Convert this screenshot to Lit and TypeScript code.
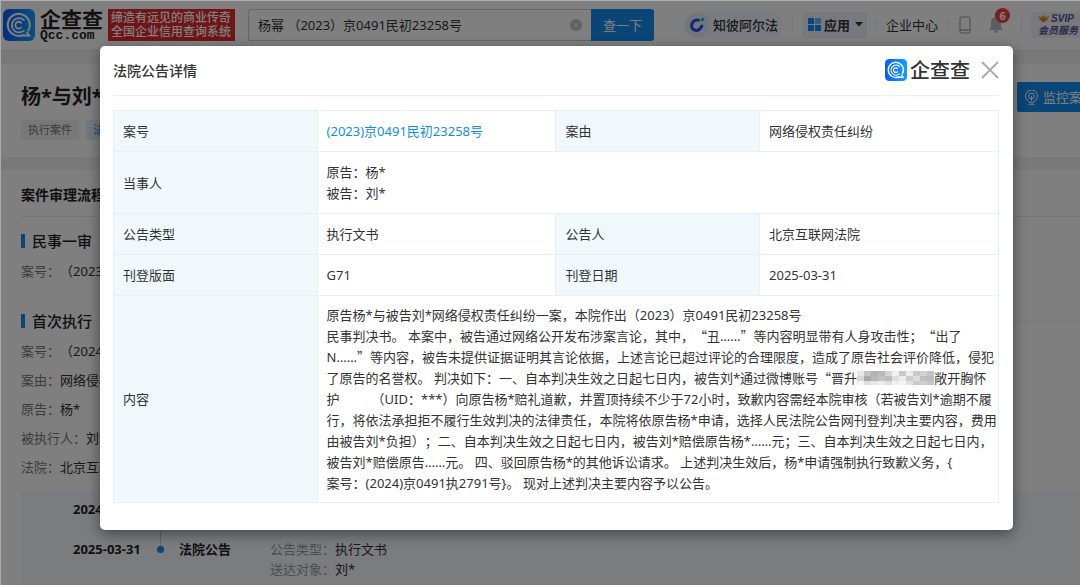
import { LitElement, html, css, svg } from "lit";
import { customElement } from "lit/decorators.js";

const brandMark = html`<svg class="mark" viewBox="0 0 32 32" aria-hidden="true">
  <defs>
    <linearGradient id="g" x1="0" y1="0" x2="1" y2="0">
      <stop offset="0" stop-color="#0a5cf5" />
      <stop offset="1" stop-color="#12a0ff" />
    </linearGradient>
  </defs>
  <rect width="32" height="32" rx="6" fill="url(#g)" />
  <g fill="none" stroke="#fff" stroke-linecap="round">
    <path d="M25.2 21.5A11 11 0 1 0 19.5 26.2L26.5 26.8L24 23.5" stroke-width="2" stroke-linejoin="round" />
    <path d="M20.9 21.6A7.2 7.2 0 1 1 20.9 10.9" stroke-width="1.8" />
    <path d="M18.2 18.5A3.4 3.4 0 1 1 18.2 13.8" stroke-width="1.8" />
  </g>
</svg>`;

const mosaicTones = [
  ["#e6e6e6", "#c4c4c4", "#b2b2b2", "#b9b9b9", "#d6d6d6", "#f0f0f0", "#c8c8c8", "#ededed", "#c9c9c9", "#d2d2d2", "#c4c4c4"],
  ["#d8d8d8", "#aaaaaa", "#b8b8b8", "#c2c2c2", "#bdbdbd", "#dedede", "#ededed", "#cccccc", "#dcdcdc", "#c0c0c0", "#bbbbbb"],
  ["#f4f4f4", "#e0e0e0", "#e6e6e6", "#ececec", "#dedede", "#f0f0f0", "#f4f4f4", "#e2e2e2", "#c8c8c8", "#cfcfcf", "#c6c6c6"],
];
const mosaic = html`<svg class="mosaic" viewBox="0 0 77 14" aria-hidden="true">
  ${mosaicTones.map((row, y) =>
    row.map((c, x) => svg`<rect x=${x * 7} y=${y * 5} width="7" height="5" fill=${c} />`)
  )}
</svg>`;
const lq = html`<span class="cjk">“</span>`;
const rq = html`<span class="cjk">”</span>`;

@customElement("app-root")
export class AppRoot extends LitElement {
  static styles = css`
    :host {
      display: block;
      position: relative;
      height: 100vh;
      overflow: hidden;
      box-sizing: border-box;
      background: #fff;
      color: #333;
      font: 13px/20px "Noto Sans", "Noto Sans CJK SC", sans-serif;
      text-spacing-trim: space-all;
    }
    * { box-sizing: border-box; }
    button, input { font: inherit; border: 0; margin: 0; padding: 0; background: none; color: inherit; text-spacing-trim: inherit; }
    h1, h2, h3, p, dl, dd, ol { margin: 0; padding: 0; list-style: none; }
    a { text-decoration: none; color: inherit; }
    svg { display: block; flex: none; }
    .cjk { font-family: "Noto Sans CJK SC", sans-serif; line-height: 1; }
    .page { min-width: 1130px; padding: 1px 0 0 1px; }

    .top { display: flex; align-items: center; height: 50px; padding: 0 0 2px 2px; border-bottom: 1px solid #e4e4e4; white-space: nowrap; }
    .top .mark { width: 32px; height: 32px; }
    .name { display: flex; flex-direction: column; width: 68px; margin-left: 5px; color: #222; }
    .name b { font-size: 21px; line-height: 22px; font-weight: 700; }
    .name small { font: bold 13px/12px "Liberation Mono", monospace; }
    .slogan { background: #e02a2f; color: #fff; font-weight: 500; font-size: 12px; line-height: 14px; padding: 2px 3px; width: 127px; }
    .search { display: flex; width: 406px; height: 32px; margin: 0 30px 0 13px; }
    .field { display: flex; align-items: center; flex: 1; min-width: 0; border: 1px solid #ccc; border-right: 0; border-radius: 3px 0 0 3px; padding: 0 9px; }
    .field input { flex: 1; min-width: 0; height: 30px; outline: 0; }
    .field svg { width: 12px; height: 12px; }
    .search .go { width: 63px; background: #128bed; color: #fff; border-radius: 0 3px 3px 0; }
    .nav { display: flex; align-items: center; gap: 9px; }
    .pill { display: flex; align-items: center; height: 26px; gap: 3px; font-weight: 500; background: #f2f6ff; border-radius: 13px; padding-right: 5px; }
    .pill svg { width: 26px; height: 26px; }
    .apps { display: flex; align-items: center; height: 26px; gap: 3px; font-weight: 700; background: #ecf2fc; border-radius: 2px; padding: 0 4px 0 6px; }
    .apps .grid { width: 13px; height: 13px; }
    .apps .caret { width: 8px; height: 5px; margin-left: 2px; }
    .sep { width: 1px; height: 13px; background: #e8e8e8; }
    .phone { width: 12px; height: 18px; margin: 0 8px 0 2px; }
    .bell { position: relative; padding-right: 8px; }
    .bell svg { width: 16px; height: 18px; }
    .badge { position: absolute; left: 7px; top: -8px; width: 15px; height: 15px; border-radius: 8px; background: #f04040; color: #fff; font-size: 11px; font-weight: 700; line-height: 15px; text-align: center; }
    .vip { background: #f0f0ff; color: #5a5490; border-radius: 3px; padding: 1px 7px; font: italic bold 10px/12px "Liberation Sans", "Noto Sans CJK SC", sans-serif; width: 60px; height: 26px; }
    .vip span { display: flex; align-items: center; gap: 2px; }
    .vip svg { width: 11px; height: 8px; }

    .strip { height: 13px; background: #f3f3f3; }
    .case { display: flex; justify-content: space-between; align-items: flex-start; padding: 18px 23px 17px 20px; white-space: nowrap; }
    .case h1 { font-size: 20px; line-height: 30px; color: #222; }
    .tags { display: flex; gap: 7px; margin-top: 8px; font-size: 11px; color: #777; }
    .tags span { background: #f0f0f0; padding: 0 7px; border-radius: 2px; }
    .tags .blue { background: #e3f2ff; color: #128bed; }
    .monitor { display: flex; align-items: center; gap: 5px; height: 30px; padding: 0 12px 0 8px; background: #128bed; color: #fff; border-radius: 2px; }
    .monitor svg { width: 13px; height: 15px; }
    .flow { padding: 0 20px; white-space: nowrap; }
    .flow h2 { font-size: 14px; line-height: 20px; padding: 15px 0 11px; color: #222; border-bottom: 1px solid #e8e8e8; }
    .flow h3 { display: flex; align-items: center; gap: 7px; font-size: 15px; line-height: 20px; color: #222; font-weight: 500; margin-top: 14px; }
    .flow h3::before { content: ""; width: 4px; height: 14px; background: #128bed; }
    .flow h3.ruled { margin-top: 30px; }
    .ruled::after { content: ""; flex: 1; height: 1px; background: #eee; }
    .facts { display: grid; gap: 9px; margin-top: 10px; }
    .facts div, .facts dd, .facts dt { display: flex; }
    .facts dt { color: #777; }
    .facts dd { color: #333; }
    .line { background: #f7f9fc; margin-top: 13px; padding: 9px 0 20px 52px; }
    .line li { display: grid; grid-template-columns: 78px 18px 1fr; gap: 0 2px; padding-bottom: 19px; position: relative; }
    .line time, .line b { font-weight: 700; color: #222; }
    .line li:not(:last-child)::after { content: ""; position: absolute; left: 87px; top: 12px; bottom: -8px; width: 1px; background: #ccd; }
    .dot { width: 7px; height: 7px; border-radius: 4px; background: #128bed; margin: 7px 4px; }
    .event { display: grid; grid-template-columns: 91px 1fr; padding-left: 6px; }
    .event i { font-style: normal; color: #999; }

    .shade { position: absolute; inset: 0; background: rgba(0, 0, 0, 0.5); border: solid #a9adad; border-width: 1px 0 0 1px; padding: 45px 67px 0 99px; }
    .dialog { background: #fff; border-radius: 5px; padding: 0 14px 27px 13px; box-shadow: 0 4px 14px rgba(0, 0, 0, 0.45); }
    .head { display: flex; align-items: center; height: 50px; padding: 0 0 2px; border-bottom: 1px solid #eee; margin-bottom: 14px; }
    .head h2 { flex: 1; font-size: 14px; color: #333; font-weight: 500; padding-top: 2px; }
    .head .mark { width: 22px; height: 22px; }
    .head b { font-size: 20px; line-height: 22px; font-weight: 500; margin: 2px 11px 0 3px; }
    .head svg.x { width: 18px; height: 18px; }
    table { width: 100%; border-collapse: collapse; table-layout: fixed; line-height: 21px; }
    .k { width: 23%; }
    .v { width: 27%; }
    th, td { border: 1px solid #e6f0f5; text-align: left; font-weight: 400; padding: 10px 9px 9px; vertical-align: middle; }
    th { background: #f0f8fc; }
    td.body { padding: 9px 0 8px 9px; white-space: nowrap; }
    td a { color: #128bed; }
    .mosaic { display: inline-block; width: 77px; height: 14px; vertical-align: -2px; }
    .gap { display: inline-block; width: 32px; }
  `;

  render() {
    return html`
      <div class="page">
        <header class="top">
          ${brandMark}
          <div class="name"><b>企查查</b><small>Qcc.com</small></div>
          <div class="slogan">缔造有远见的商业传奇<br />全国企业信用查询系统</div>
          <form class="search" @submit=${(e: Event) => e.preventDefault()}>
            <div class="field">
              <input aria-label="搜索" .value=${"杨幂 （2023）京0491民初23258号"} />
              <svg viewBox="0 0 12 12"><circle cx="6" cy="6" r="6" fill="#c4c4c4" /><path d="M4 4l4 4M8 4l-4 4" stroke="#fff" /></svg>
            </div>
            <button class="go">查一下</button>
          </form>
          <nav class="nav">
            <a class="pill" href="#">
              <svg viewBox="0 0 26 26"><circle cx="13" cy="13" r="12.5" fill="#e4ecfa" /><path d="M14.5 8.200C10 7.500 7.400 10.500 7.600 14c.4 5 6.800 6 9.400 1.500l.8-1.500" fill="none" stroke="#2350e8" stroke-width="3" stroke-linecap="round" /><circle cx="18.500" cy="7.500" r="1.800" fill="#14c4a4" /></svg>
              知彼阿尔法</a>
            <span class="sep"></span>
            <button class="apps">
              <svg class="grid" viewBox="0 0 13 13"><path d="M0 0h6v6H0zM0 7h6v6H0zM7 7h6v6H7z" fill="#128bed" /><path d="M7 0h6v6H7z" fill="#6cb9f5" /></svg>
              应用
              <svg class="caret" viewBox="0 0 8 5"><path d="M0 0h8L4 4.500z" fill="#333" /></svg>
            </button>
            <span class="sep"></span>
            <a href="#">企业中心</a>
            <span class="sep"></span>
            <svg class="phone" viewBox="0 0 12 18"><rect x="1" y="1" width="10" height="16" rx="2" fill="none" stroke="#bbb" stroke-width="1.500" /><path d="M1 14h10" stroke="#bbb" stroke-width="2" /></svg>
            <a class="bell" href="#" aria-label="消息"><svg viewBox="0 0 16 18"><path d="M8 1c-3.500 0-5 2.600-5 5.500V11l-2 3h14l-2-3V6.500C13 3.600 11.500 1 8 1z" fill="#bbb" /><path d="M6 15.500h4" stroke="#bbb" stroke-width="2" /></svg><span class="badge">6</span></a>
            <span class="sep"></span>
            <a class="vip" href="#"><span><svg viewBox="0 0 11 8"><path d="M0 1l3 1L5.500 0 8 2 11 1 9.500 5 5.500 8 1.500 5z" fill="#e8a83c" /><path d="M3.500 3.500l2 2 2-2" fill="none" stroke="#5a3c10" /></svg>SVIP</span>会员服务</a>
          </nav>
        </header>
        <div class="strip"></div>
        <section class="case">
          <div>
            <h1>杨*与刘*</h1>
            <div class="tags"><span>执行案件</span><span class="blue">法院公告</span></div>
          </div>
          <button class="monitor">
            <svg viewBox="0 0 13 15" fill="none" stroke="#fff"><path d="M4 11.500A6 6 0 1 1 9 11.500" /><circle cx="6.500" cy="6" r="2.800" /><path d="M6.500 6v5M4 12.500h5M3.500 14.300h6" /></svg>
            监控案件
          </button>
        </section>
        <div class="strip"></div>
        <section class="flow">
          <h2>案件审理流程</h2>
          <h3>民事一审</h3>
          <dl class="facts"><div><dt>案号：</dt><dd>（2023）</dd></div></dl>
          <h3 class="ruled">首次执行</h3>
          <dl class="facts">
            <div><dt>案号：</dt><dd>（2024）</dd></div>
            <div><dt>案由：</dt><dd>网络侵权</dd></div>
            <div><dt>原告：</dt><dd>杨*</dd></div>
            <div><dt>被执行人：</dt><dd>刘*</dd></div>
            <div><dt>法院：</dt><dd>北京互联</dd></div>
          </dl>
          <ol class="line">
            <li><time>2024-</time><span class="dot"></span></li>
            <li><time>2025-03-31</time><span class="dot"></span>
              <div class="event"><b>法院公告</b><p><i>公告类型：</i>执行文书<br /><i>送达对象：</i>刘*</p></div></li>
          </ol>
        </section>
      </div>

      <div class="shade">
        <section class="dialog" role="dialog" aria-label="法院公告详情">
          <header class="head">
            <h2>法院公告详情</h2>
            ${brandMark}<b>企查查</b>
            <button aria-label="关闭"><svg class="x" viewBox="0 0 18 18"><path d="M1 1l16 16M17 1L1 17" stroke="#aaa" stroke-width="1.800" /></svg></button>
          </header>
          <table>
            <colgroup><col class="k" /><col class="v" /><col class="k" /><col class="v" /></colgroup>
            <tbody>
              <tr><th scope="row">案号</th><td><a href="#">(2023)京0491民初23258号</a></td><th scope="row">案由</th><td>网络侵权责任纠纷</td></tr>
              <tr><th scope="row">当事人</th><td colspan="3">原告：杨*<br />被告：刘*</td></tr>
              <tr><th scope="row">公告类型</th><td>执行文书</td><th scope="row">公告人</th><td>北京互联网法院</td></tr>
              <tr><th scope="row">刊登版面</th><td>G71</td><th scope="row">刊登日期</th><td>2025-03-31</td></tr>
              <tr><th scope="row">内容</th><td class="body" colspan="3">
                原告杨*与被告刘*网络侵权责任纠纷一案，本院作出（2023）京0491民初23258号<br />
                民事判决书。 本案中，被告通过网络公开发布涉案言论，其中，${lq}丑……${rq}等内容明显带有人身攻击性；${lq}出了<br />
                N……${rq}等内容，被告未提供证据证明其言论依据，上述言论已超过评论的合理限度，造成了原告社会评价降低，侵犯<br />
                了原告的名誉权。 判决如下：一、自本判决生效之日起七日内，被告刘*通过微博账号${lq}晋升${mosaic}敞开胸怀<br />
                护<span class="gap"></span>（UID：***）向原告杨*赔礼道歉，并置顶持续不少于72小时，致歉内容需经本院审核（若被告刘*逾期不履<br />
                行，将依法承担拒不履行生效判决的法律责任，本院将依原告杨*申请，选择人民法院公告网刊登判决主要内容，费用<br />
                由被告刘*负担）；二、自本判决生效之日起七日内，被告刘*赔偿原告杨*……元；三、自本判决生效之日起七日内，<br />
                被告刘*赔偿原告……元。 四、驳回原告杨*的其他诉讼请求。 上述判决生效后，杨*申请强制执行致歉义务，{<br />
                案号：(2024)京0491执2791号}。 现对上述判决主要内容予以公告。
              </td></tr>
            </tbody>
          </table>
        </section>
      </div>
    `;
  }
}
